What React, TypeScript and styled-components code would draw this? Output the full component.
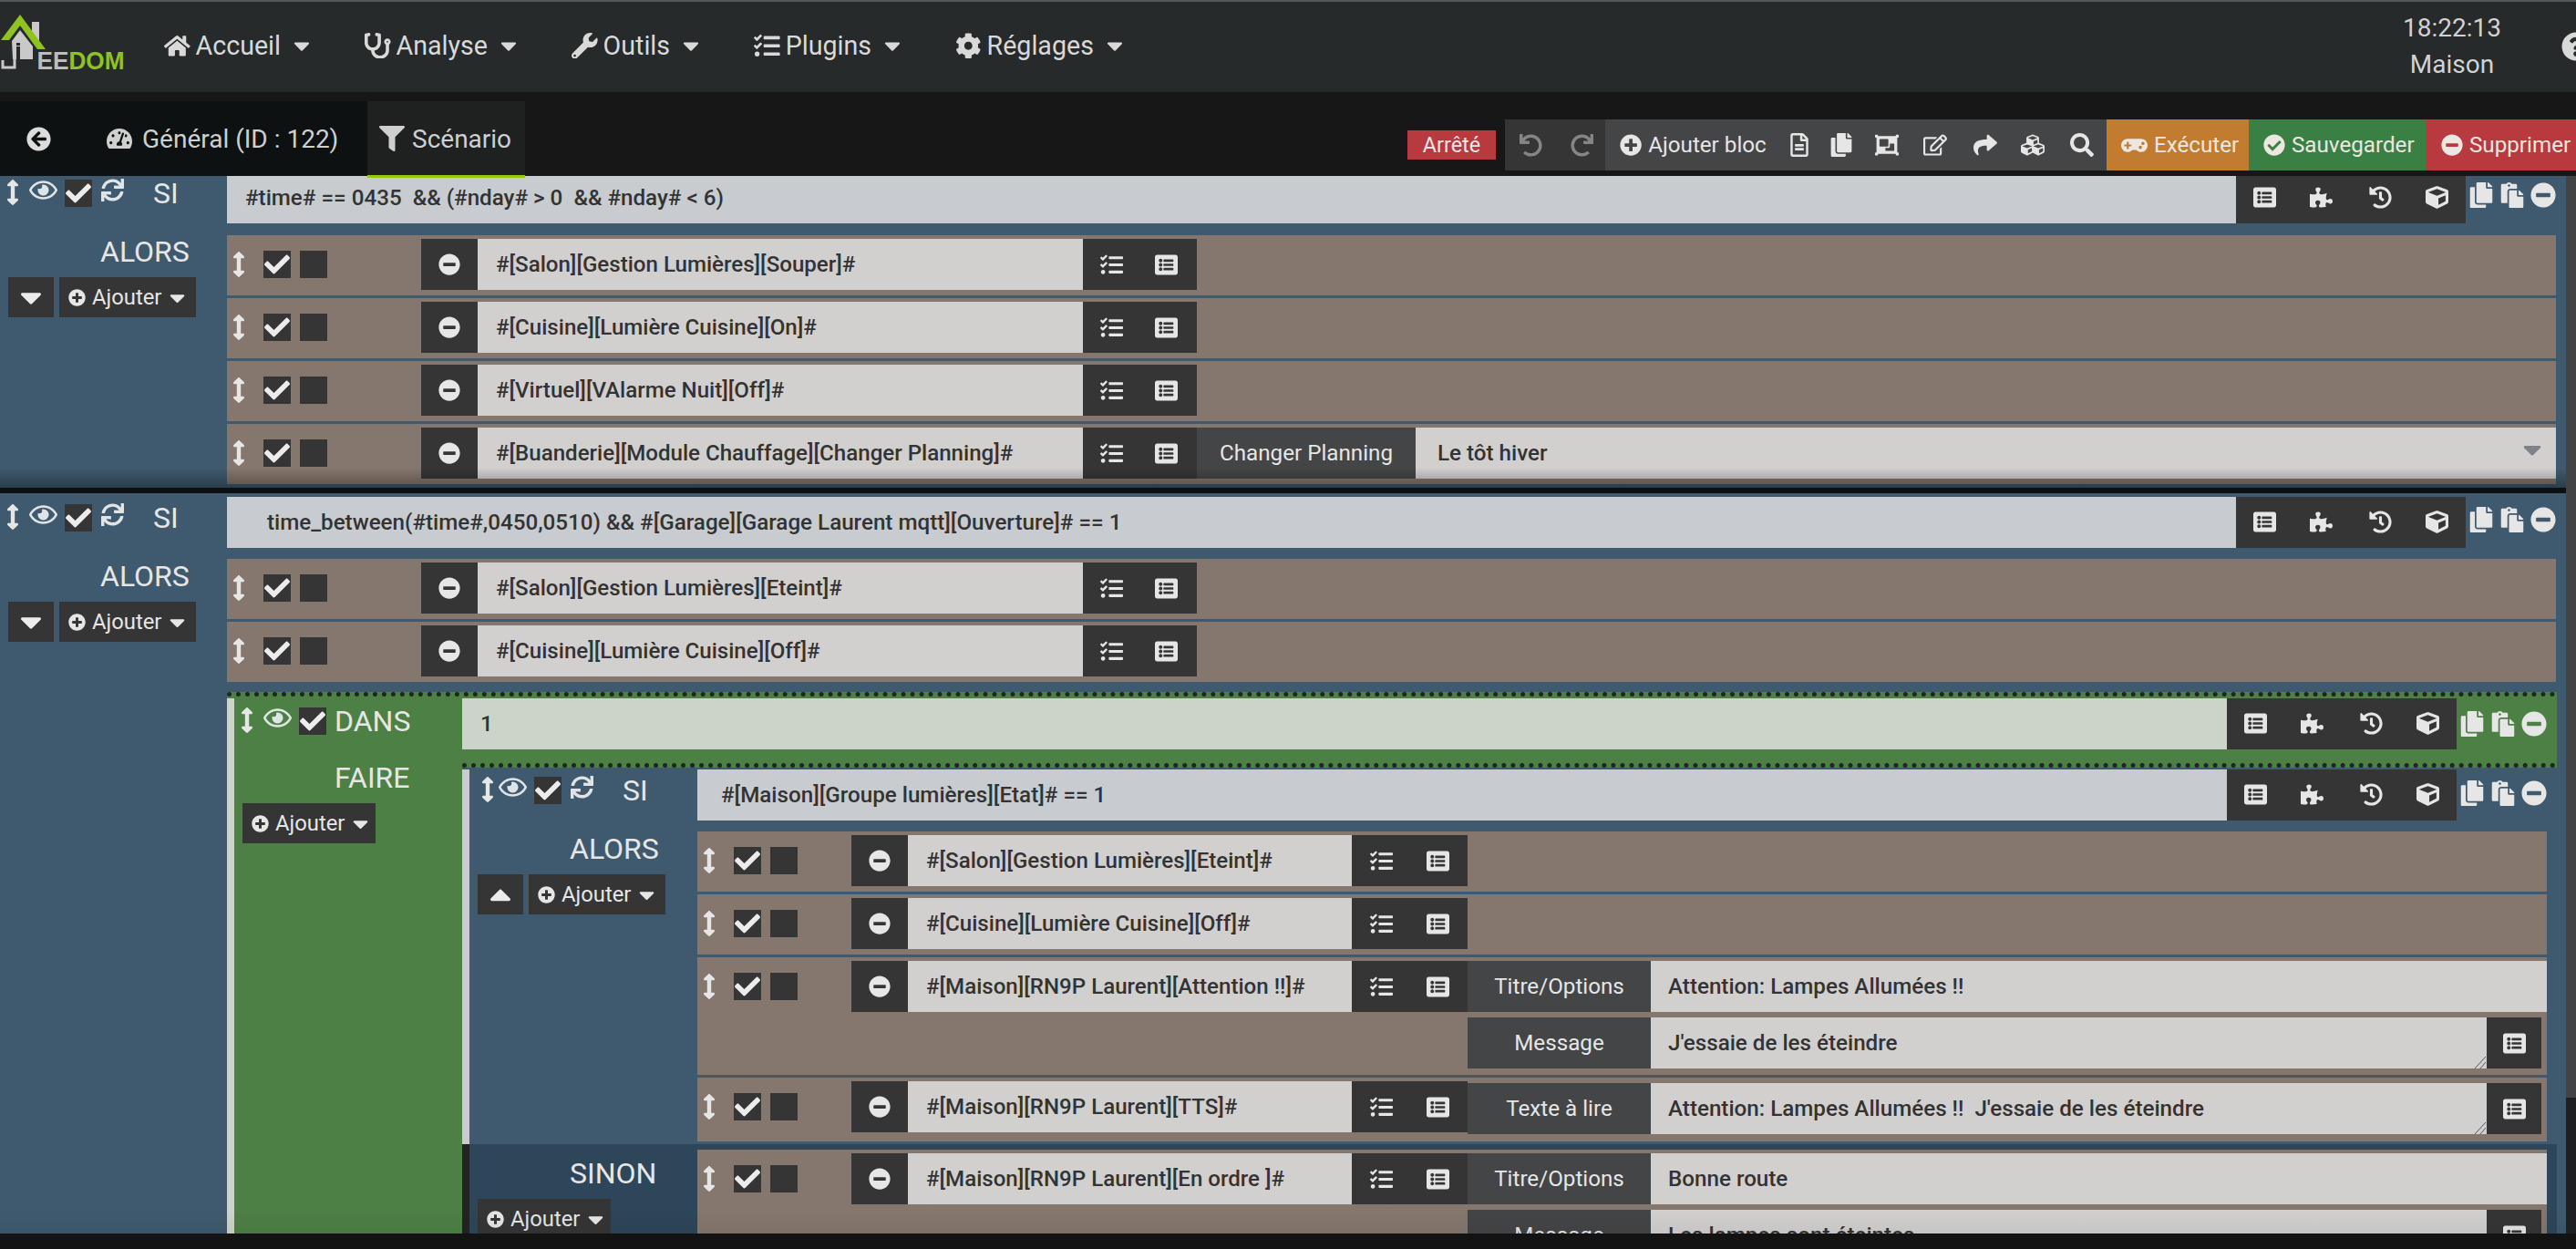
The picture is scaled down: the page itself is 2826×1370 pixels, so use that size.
import React from "react";
import styled, { createGlobalStyle } from "styled-components";
import {
  FaHome, FaStethoscope, FaWrench, FaTasks, FaCog, FaQuestionCircle, FaArrowCircleLeft, FaTachometerAlt,
  FaFilter, FaUndo, FaRedo, FaPlusCircle, FaRegFileAlt, FaCopy, FaObjectGroup, FaRegEdit, FaShare,
  FaCubes, FaSearch, FaGamepad, FaCheckCircle, FaMinusCircle, FaListAlt, FaPuzzlePiece, FaHistory, FaCube,
  FaPaste, FaArrowsAltV, FaRegEye, FaCheck, FaSync, FaCaretDown, FaCaretUp,
} from "react-icons/fa";

const Global = createGlobalStyle`
  html, body { margin: 0; padding: 0; height: 100%; background: #131313; overflow: hidden; }
  #root { height: 100%; }
  * { box-sizing: border-box; }
  body { font-family: Roboto, "Liberation Sans", sans-serif; color: #e6e6e6; }
`;

const Page = styled.div`
  height: 100vh; width: 100%; display: flex; flex-direction: column; overflow: hidden;
`;
const Header = styled.header`
  height: 101px; flex: none; background: #262a2b; border-top: 2px solid #55585a;
  display: flex; align-items: center; position: relative;
`;
const LogoBox = styled.div`
  width: 180px; flex: none; height: 99px; margin-top: -2px;
`;
const Nav = styled.nav`
  display: flex; gap: 55px; align-items: center; font-size: 28.6px; color: #d9d9d9; margin-top: -3px;
`;
const NavItem = styled.div`
  display: flex; align-items: center; gap: 6px;
`;
const NavCaret = styled(FaCaretDown)`
  margin-left: 3px; font-size: 28px;
`;
const Clock = styled.div`
  margin-left: auto; display: flex; flex-direction: column; align-items: center; font-size: 28px;
  color: #d2d2d2; line-height: 40px; margin-top: -2px; width: 108px;
`;
const Help = styled.div`
  margin-left: 66px; margin-right: -16px; font-size: 32px; color: #d9d9d9; display: flex; margin-top: -2px;
`;

const SubBar = styled.div`
  height: 92px; flex: none; background: #171717; display: flex; align-items: flex-end; position: relative; z-index: 2;
`;
const TabStrip = styled.div`
  height: 82px; width: 403px; flex: none; background: #0d1112; display: flex; align-items: center;
  font-size: 28px; color: #cfcfcf;
`;
const BackIcon = styled.div`
  width: 117px; padding-left: 29px; flex: none; display: flex; font-size: 27px; color: #dcdcdc;
`;
const TabLabel = styled.div`
  display: flex; align-items: center; gap: 11px;
`;
const ActiveTab = styled.div`
  height: 82px; width: 173px; flex: none; background: #1f2020; display: flex; align-items: center; gap: 8px;
  padding-left: 13px; font-size: 28px; color: #cfcfcf; position: relative;
  &::after {
    content: ""; position: absolute; left: 0; right: 0; bottom: -2px; height: 3px; background: #94ca02;
  }
`;
const Toolbar = styled.div`
  margin-left: auto; height: 56px; margin-bottom: 6px; display: flex; align-items: center;
  font-size: 24.2px; color: #e6e6e6;
`;
const Status = styled.div`
  width: 97px; height: 32px; background: #b83a3f; margin-right: 10px; display: flex; align-items: center;
  justify-content: center; font-size: 23.4px; color: #f0e6e6;
`;
const UndoGroup = styled.div`
  width: 110px; height: 56px; background: #353536; display: flex; align-items: center; gap: 31px;
  padding-left: 16px; font-size: 25px; color: #858585;
`;
const MainGroup = styled.div`
  width: 550px; height: 56px; background: #444546; display: flex; align-items: center; padding-left: 16px;
`;
const AddBloc = styled.div`
  display: flex; align-items: center; gap: 7px; width: 184px; flex: none;
`;
const ToolIcon = styled.div<{ $w: number }>`
  width: ${(p) => p.$w}px; flex: none; display: flex; font-size: 26px;
`;
const ColorBtn = styled.div<{ $bg: string; $w: number; $icon?: number }>`
  width: ${(p) => p.$w}px; height: 56px; background: ${(p) => p.$bg}; display: flex; align-items: center;
  gap: 7px; padding-left: 16px; color: #ece7e0; font-size: 24.2px;
  svg { font-size: ${(p) => p.$icon ?? 24}px; }
`;

const Content = styled.div`
  flex: 1; min-height: 0; display: flex; position: relative; overflow: hidden;
`;
const Main = styled.main`
  flex: 1; min-width: 0; overflow: hidden; display: flex; flex-direction: column; position: relative;
  &::after {
    content: ""; position: absolute; left: 0; right: 0; bottom: 0; height: 28px;
    background: linear-gradient(rgba(0,0,0,0), rgba(0,0,0,0.05));
  }
`;
const ScrollTrack = styled.div`
  width: 11px; flex: none; display: flex; flex-direction: column; background: #1e1f20;
`;
const ScrollThumb = styled.div`
  height: 1011px; flex: none; background: #424344;
`;
const BottomStrip = styled.div`
  height: 17px; flex: none; background: #131313;
`;

const Divider = styled.div`
  height: 6px; flex: none; background: #0d0f10;
`;

const Block = styled.section<{ $bg: string; $dots?: boolean; $clip?: boolean; $cut?: boolean; $fade?: boolean; $right?: number; $mt?: number }>`
  background: ${(p) => p.$bg};
  ${(p) => (p.$clip ? "background-clip: padding-box;" : "")}
  ${(p) => (p.$dots ? "border-top: 5px dotted #1d2620; padding-top: 2px;" : "padding-top: 4px;")}
  ${(p) => (p.$cut ? "margin-top: -8px;" : "")}
  ${(p) => (p.$mt ? `margin-top: ${p.$mt}px;` : "")}
  ${(p) => (p.$right ? `margin-right: -${p.$right}px;` : "")}
  flex: none; position: relative;
  ${(p) =>
    p.$fade
      ? `&::after { content: ""; position: absolute; left: 0; right: 0; bottom: 0; height: 22px;
         background: linear-gradient(rgba(0,0,0,0), rgba(0,0,0,0.32)); }`
      : ""}
`;
const Head = styled.div<{ $strip?: string }>`
  display: flex; align-items: flex-start;
  ${(p) => (p.$strip ? `border-left: 8px solid ${p.$strip};` : "")}
`;
const Controls = styled.div<{ $w: number; $top: number }>`
  width: ${(p) => p.$w}px; flex: none; height: 56px; display: grid;
  grid-template-columns: 32px 39px 40px 57px auto; align-items: start; padding-top: ${(p) => p.$top}px;
`;
const Grip = styled.div<{ $left?: number }>`
  display: flex; font-size: 28px; color: #e6e6e6; margin-left: ${(p) => p.$left ?? 0}px;
`;
const Eye = styled.div`
  display: flex; font-size: 31px; color: #e0e4e6; margin-top: -4px;
`;
const CheckBox = styled.div`
  width: 30px; height: 30px; background: #353535; display: flex; align-items: center; justify-content: center;
  font-size: 28px; color: #ececec; flex: none;
`;
const EmptyBox = styled.div`
  width: 30px; height: 30px; background: #353535; flex: none;
`;
const SyncIcon = styled.div`
  display: flex; font-size: 25px; color: #e0e4e6; margin-top: -1px;
`;
const BigWord = styled.div`
  font-size: 32px; line-height: 32px; color: #e6e6e6; white-space: nowrap; margin-top: -1px;
`;
const DansWord = styled(BigWord)`
  margin-left: -1px;
`;
const CondField = styled.div<{ $bg: string; $pad?: number }>`
  flex: 1; min-width: 0; height: 56px; background: ${(p) => p.$bg}; color: #333;
  display: flex; align-items: center; padding-left: ${(p) => p.$pad ?? 20}px; font-size: 24.2px; font-weight: 500;
  white-space: pre;
`;
const BlockTools = styled.div`
  width: 252px; height: 56px; flex: none; background: #353535; display: grid; padding-bottom: 2px;
  grid-template-columns: 62px 65px 62px 50px; align-items: center; font-size: 25px;
  color: #e6e6e6; padding-left: 19px;
`;
const BlockEdit = styled.div<{ $top?: number }>`
  width: 110px; flex: none; display: flex; padding: ${(p) => p.$top ?? 11}px 0 0 3px; gap: 6px; font-size: 28px; color: #e6e6e6;
`;
const Body = styled.div<{ $strip?: string; $bg?: string }>`
  display: flex; align-items: stretch;
  ${(p) => (p.$strip ? `border-left: 8px solid ${p.$strip};` : "")}
  ${(p) => (p.$bg ? `background: ${p.$bg};` : "")}
`;
const Side = styled.div<{ $w: number; $top?: number }>`
  width: ${(p) => p.$w}px; flex: none; padding-top: ${(p) => p.$top ?? 15}px;
`;
const SideWord = styled.div`
  font-size: 32px; line-height: 32px; padding-left: 110px; color: #e6e6e6;
`;
const SideButtons = styled.div`
  display: flex; gap: 6px; padding-left: 9px; margin-top: 12px;
`;
const CaretBtn = styled.div`
  width: 50px; height: 44px; background: #353535; display: flex; align-items: center; justify-content: center;
  font-size: 38px; color: #ececec;
`;
const AddBtn = styled.div<{ $w: number }>`
  width: ${(p) => p.$w}px; height: 44px; background: #353535; display: flex; align-items: center; padding-left: 10px; gap: 7px;
  font-size: 23.8px; color: #e6e6e6; flex: none;
  svg:first-child { font-size: 19px; }
  svg:last-child { font-size: 27px; margin-left: -3px; }
`;
const Actions = styled.div<{ $top?: number; $right: number; $bottom?: number }>`
  flex: 1; min-width: 0; display: flex; flex-direction: column; gap: 3px;
  padding: ${(p) => p.$top ?? 12}px ${(p) => p.$right}px ${(p) => p.$bottom ?? 0}px 0;
`;
const Row = styled.div`
  background: #85776e; min-height: 66px; padding: 4px 0 6px; display: flex; align-items: flex-start; flex: none;
`;
const Lead = styled.div<{ $w: number }>`
  width: ${(p) => p.$w}px; flex: none; height: 56px; display: flex; align-items: center; gap: 10px;
  font-size: 26px; color: #e6e6e6;
`;
const LeadGrip = styled.div`
  width: 26px; flex: none; display: flex; justify-content: center; margin-right: 4px;
  font-size: 28px;
`;
const MinusBtn = styled.div`
  width: 62px; height: 56px; flex: none; background: #353535; display: flex; align-items: center; justify-content: center;
  font-size: 24px; color: #e6e6e6;
`;
const CmdField = styled.div<{ $w: number }>`
  width: ${(p) => p.$w}px; height: 56px; flex: none; background: #d2d0cf; color: #333; display: flex; align-items: center;
  padding-left: 20px; font-size: 24.1px; font-weight: 500; white-space: nowrap; overflow: hidden;
`;
const CmdTools = styled.div<{ $w: number; $pad: number; $gap: number }>`
  width: ${(p) => p.$w}px; height: 56px; flex: none; background: #353535; display: flex; align-items: center;
  padding-left: ${(p) => p.$pad}px; gap: ${(p) => p.$gap}px; font-size: 25px; color: #e6e6e6;
`;
const Options = styled.div<{ $pb?: number; $mt?: number }>`
  flex: 1; min-width: 0; display: flex; flex-direction: column; gap: 6px;
  margin-top: ${(p) => p.$mt ?? 0}px; padding-bottom: ${(p) => p.$pb ?? 0}px;
`;
const OptionRow = styled.div`
  display: flex; height: 56px; flex: none;
`;
const OptionLabel = styled.div<{ $w: number }>`
  width: ${(p) => p.$w}px; flex: none; background: #444546; display: flex; align-items: center; justify-content: center;
  font-size: 24.2px; color: #e6e6e6;
`;
const OptionValue = styled.div<{ $pad: number }>`
  flex: 1; min-width: 0; background: #d2d0cf; color: #333; display: flex; align-items: center; padding-left: ${(p) => p.$pad}px;
  font-size: 24.2px; font-weight: 500; white-space: pre; position: relative;
`;
const Resizer = styled.svg`
  position: absolute; right: 0; bottom: 0; width: 16px; height: 16px;
`;
const SelectCaret = styled(FaCaretDown)`
  position: absolute; right: 10px; top: 8px; font-size: 32px; color: #7f8286;
`;
const AreaBtn = styled.div`
  width: 60px; flex: none; background: #353535; display: flex; align-items: center; justify-content: center;
  font-size: 25px; color: #e6e6e6; margin-right: 6px;
`;

const GROUP = { lead: 213, field: 664, tools: 125, label: 240, pad: 19, gap: 35, value: 24 };
const NEST = { lead: 169, field: 487, tools: 127, label: 201, pad: 20, gap: 37, value: 19 };
type Geo = typeof GROUP;

type Opt = { label: string; value: string; area?: boolean; select?: boolean };

function Action({ name, geo, opts, pb, mt }: { name: string; geo: Geo; opts?: Opt[]; pb?: number; mt?: number }) {
  return (
    <Row>
      <Lead $w={geo.lead}>
        <LeadGrip><FaArrowsAltV /></LeadGrip>
        <CheckBox><FaCheck /></CheckBox>
        <EmptyBox />
      </Lead>
      <MinusBtn><FaMinusCircle /></MinusBtn>
      <CmdField $w={geo.field}>{name}</CmdField>
      <CmdTools $w={geo.tools} $pad={geo.pad} $gap={geo.gap}><FaTasks /><FaListAlt /></CmdTools>
      {opts && (
        <Options $pb={pb} $mt={mt}>
          {opts.map((o) => (
            <OptionRow key={o.label}>
              <OptionLabel $w={geo.label}>{o.label}</OptionLabel>
              <OptionValue $pad={geo.value}>
                {o.value}
                {o.select && <SelectCaret />}
                {o.area && (
                  <Resizer viewBox="0 0 16 16">
                    <path d="M3 16 L15 3 M9 16 L15 9" stroke="#555" strokeWidth="1" fill="none" />
                  </Resizer>
                )}
              </OptionValue>
              {o.area && <AreaBtn><FaListAlt /></AreaBtn>}
            </OptionRow>
          ))}
        </Options>
      )}
    </Row>
  );
}

function HeadTools({ top }: { top?: number }) {
  return (
    <>
      <BlockTools><FaListAlt /><FaPuzzlePiece /><FaHistory /><FaCube /></BlockTools>
      <BlockEdit $top={top}><FaCopy /><FaPaste /><FaMinusCircle /></BlockEdit>
    </>
  );
}

function Ajouter({ w = 150 }: { w?: number }) {
  return <AddBtn $w={w}><FaPlusCircle />Ajouter<FaCaretDown /></AddBtn>;
}

function SideControls({ w, word, sync, grip, dans }: { w: number; word: string; sync?: boolean; grip?: number; dans?: boolean }) {
  return (
    <Controls $w={w} $top={dans ? 10 : 8}>
      <Grip $left={grip}><FaArrowsAltV /></Grip>
      <Eye><FaRegEye /></Eye>
      <CheckBox><FaCheck /></CheckBox>
      {dans ? <DansWord>{word}</DansWord> : <SyncIcon>{sync && <FaSync />}</SyncIcon>}
      {!dans && <BigWord>{word}</BigWord>}
    </Controls>
  );
}

function Logo() {
  return (
    <svg width="140" height="80" viewBox="0 0 140 80">
      <rect x="35" y="23" width="8" height="20" fill="#c9c9c9" />
      <polygon points="13,44 22,32 36,50 36,64 14,64" fill="#c9c9c9" />
      <rect x="18" y="46" width="4" height="3" fill="#262a2b" />
      <rect x="18" y="50" width="4" height="16" fill="#262a2b" />
      <path d="M3 65 V73 H16 V64" fill="none" stroke="#c9c9c9" strokeWidth="3" />
      <polygon points="1,43 22,15 50,53 41,53 22,27 10,43" fill="#8fc31f" />
      <text x="40.5" y="74.5" fontFamily="Liberation Sans, sans-serif" fontWeight="700" fontSize="27" textLength="96" lengthAdjust="spacingAndGlyphs">
        <tspan fill="#bdbdbd">EE</tspan><tspan fill="#8fc31f">DOM</tspan>
      </text>
    </svg>
  );
}

const NAV: [React.ReactNode, string][] = [
  [<FaHome key="h" />, "Accueil"],
  [<FaStethoscope key="s" />, "Analyse"],
  [<FaWrench key="w" />, "Outils"],
  [<FaTasks key="t" />, "Plugins"],
  [<FaCog key="c" />, "Réglages"],
];

export default function App() {
  return (
    <Page>
      <Global />
      <Header>
        <LogoBox><Logo /></LogoBox>
        <Nav>
          {NAV.map(([icon, label]) => (
            <NavItem key={label}>{icon}{label}<NavCaret /></NavItem>
          ))}
        </Nav>
        <Clock><div>18:22:13</div><div>Maison</div></Clock>
        <Help><FaQuestionCircle /></Help>
      </Header>
      <SubBar>
        <TabStrip>
          <BackIcon><FaArrowCircleLeft /></BackIcon>
          <TabLabel><FaTachometerAlt />Général (ID : 122)</TabLabel>
        </TabStrip>
        <ActiveTab><FaFilter />Scénario</ActiveTab>
        <Toolbar>
          <Status>Arrêté</Status>
          <UndoGroup><FaUndo /><FaRedo /></UndoGroup>
          <MainGroup>
            <AddBloc><FaPlusCircle />Ajouter bloc</AddBloc>
            <ToolIcon $w={46}><FaRegFileAlt /></ToolIcon>
            <ToolIcon $w={50}><FaCopy /></ToolIcon>
            <ToolIcon $w={53}><FaObjectGroup /></ToolIcon>
            <ToolIcon $w={55}><FaRegEdit /></ToolIcon>
            <ToolIcon $w={52}><FaShare /></ToolIcon>
            <ToolIcon $w={54}><FaCubes /></ToolIcon>
            <ToolIcon $w={30}><FaSearch /></ToolIcon>
          </MainGroup>
          <ColorBtn $bg="#c27c30" $w={156} $icon={29}><FaGamepad />Exécuter</ColorBtn>
          <ColorBtn $bg="#3a8044" $w={195}><FaCheckCircle />Sauvegarder</ColorBtn>
          <ColorBtn $bg="#b8393e" $w={164}><FaMinusCircle />Supprimer</ColorBtn>
        </Toolbar>
      </SubBar>
      <Content>
        <Main>
          <Block $bg="#3f5a6e" $cut $fade>
            <Head>
              <SideControls w={249} word="SI" sync />
              <CondField $bg="#c8ccd0">{"#time# == 0435  && (#nday# > 0  && #nday# < 6)"}</CondField>
              <HeadTools />
            </Head>
            <Body>
              <Side $w={249}>
                <SideWord>ALORS</SideWord>
                <SideButtons><CaretBtn><FaCaretDown /></CaretBtn><Ajouter /></SideButtons>
              </Side>
              <Actions $top={13} $right={11} $bottom={4}>
                <Action geo={GROUP} name="#[Salon][Gestion Lumières][Souper]#" />
                <Action geo={GROUP} name="#[Cuisine][Lumière Cuisine][On]#" />
                <Action geo={GROUP} name="#[Virtuel][VAlarme Nuit][Off]#" />
                <Action geo={GROUP} name="#[Buanderie][Module Chauffage][Changer Planning]#"
                  opts={[{ label: "Changer Planning", value: "Le tôt hiver", select: true }]} />
              </Actions>
            </Body>
          </Block>
          <Divider />
          <Block $bg="#3f5a6e">
            <Head>
              <SideControls w={249} word="SI" sync />
              <CondField $bg="#c8ccd0" $pad={44}>{"time_between(#time#,0450,0510) && #[Garage][Garage Laurent mqtt][Ouverture]# == 1"}</CondField>
              <HeadTools />
            </Head>
            <Body>
              <Side $w={249}>
                <SideWord>ALORS</SideWord>
                <SideButtons><CaretBtn><FaCaretDown /></CaretBtn><Ajouter /></SideButtons>
              </Side>
              <Actions $right={11}>
                <Action geo={GROUP} name="#[Salon][Gestion Lumières][Eteint]#" />
                <Action geo={GROUP} name="#[Cuisine][Lumière Cuisine][Off]#" />
                <Block $bg="#4d8045" $dots $right={1} $mt={8}>
                  <Head $strip="#cdd5ca">
                    <SideControls w={250} word="DANS" dans />
                    <CondField $bg="#ccd4c9">1</CondField>
                    <HeadTools top={14} />
                  </Head>
                  <Body $strip="#cdd5ca">
                    <Side $w={250}>
                      <SideWord>FAIRE</SideWord>
                      <SideButtons><Ajouter w={146} /></SideButtons>
                    </Side>
                    <Actions $top={15} $right={0}>
                      <Block $bg="#3f5a6e" $dots $clip>
                        <Head $strip="#c8ccd0">
                          <SideControls w={250} word="SI" sync grip={8} />
                          <CondField $bg="#c8ccd0" $pad={26}>#[Maison][Groupe lumières][Etat]# == 1</CondField>
                          <HeadTools top={12} />
                        </Head>
                        <Body $strip="#c8ccd0">
                          <Side $w={250}>
                            <SideWord>ALORS</SideWord>
                            <SideButtons><CaretBtn><FaCaretUp /></CaretBtn><Ajouter /></SideButtons>
                          </Side>
                          <Actions $right={11} $bottom={3}>
                            <Action geo={NEST} name="#[Salon][Gestion Lumières][Eteint]#" />
                            <Action geo={NEST} name="#[Cuisine][Lumière Cuisine][Off]#" />
                            <Action geo={NEST} name="#[Maison][RN9P Laurent][Attention !!]#" pb={1}
                              opts={[
                                { label: "Titre/Options", value: "Attention: Lampes Allumées !!" },
                                { label: "Message", value: "J'essaie de les éteindre", area: true },
                              ]} />
                            <Action geo={NEST} name="#[Maison][RN9P Laurent][TTS]#" mt={2} pb={2}
                              opts={[{ label: "Texte à lire", value: "Attention: Lampes Allumées !!  J'essaie de les éteindre", area: true }]} />
                          </Actions>
                        </Body>
                        <Body $strip="#222323" $bg="#2e4659">
                          <Side $w={250} $top={16}>
                            <SideWord>SINON</SideWord>
                            <SideButtons><Ajouter w={146} /></SideButtons>
                          </Side>
                          <Actions $top={6} $right={11}>
                            <Action geo={NEST} name="#[Maison][RN9P Laurent][En ordre ]#"
                              opts={[
                                { label: "Titre/Options", value: "Bonne route" },
                                { label: "Message", value: "Les lampes sont éteintes", area: true },
                              ]} />
                          </Actions>
                        </Body>
                      </Block>
                    </Actions>
                  </Body>
                </Block>
              </Actions>
            </Body>
          </Block>
        </Main>
        <ScrollTrack><ScrollThumb /></ScrollTrack>
      </Content>
      <BottomStrip />
    </Page>
  );
}
